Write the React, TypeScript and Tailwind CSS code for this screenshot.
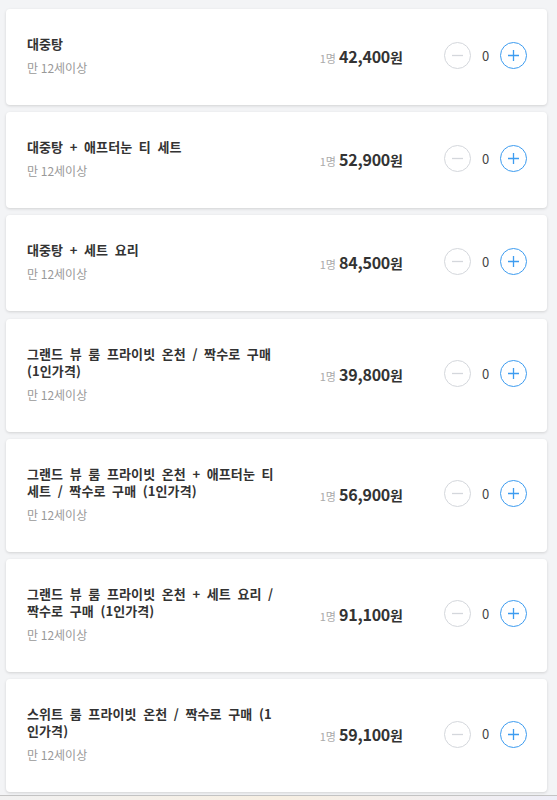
const items = [
  { title: '대중탕', age: '만 12세이상', price: '42,400' },
  { title: '대중탕 + 애프터눈 티 세트', age: '만 12세이상', price: '52,900' },
  { title: '대중탕 + 세트 요리', age: '만 12세이상', price: '84,500' },
  {
    title: '그랜드 뷰 룸 프라이빗 온천 / 짝수로 구매 (1인가격)',
    age: '만 12세이상',
    price: '39,800',
  },
  {
    title: '그랜드 뷰 룸 프라이빗 온천 + 애프터눈 티 세트 / 짝수로 구매 (1인가격)',
    age: '만 12세이상',
    price: '56,900',
  },
  {
    title: '그랜드 뷰 룸 프라이빗 온천 + 세트 요리 / 짝수로 구매 (1인가격)',
    age: '만 12세이상',
    price: '91,100',
  },
  {
    title: '스위트 룸 프라이빗 온천 / 짝수로 구매 (1인가격)',
    age: '만 12세이상',
    price: '59,100',
  },
];

const font = { fontFamily: '"Noto Sans CJK KR", "Noto Sans", sans-serif' };

const MinusButton = () => (
  <button
    type="button"
    className="flex h-[27px] w-[27px] items-center justify-center rounded-full border border-[#d4d7dc] bg-white"
  >
    <svg width="13" height="13" viewBox="0 0 13 13">
      <path d="M1 6.5h11" stroke="#d4d7dc" strokeWidth="1.3" />
    </svg>
  </button>
);

const PlusButton = () => (
  <button
    type="button"
    className="flex h-[27px] w-[27px] items-center justify-center rounded-full border border-[#3d9cf0] bg-white"
  >
    <svg width="13" height="13" viewBox="0 0 13 13">
      <path d="M1 6.5h11M6.5 1v11" stroke="#3d9cf0" strokeWidth="1.3" />
    </svg>
  </button>
);

function TicketRow({ title, age, price }: { title: string; age: string; price: string }) {
  return (
    <div className="flex items-center justify-between rounded-[4px] bg-white pb-[29px] pl-[21px] pr-[20px] pt-[26px] shadow-[0_1px_3px_rgba(0,0,0,0.14)]">
      <div className="w-[254px]">
        <div className="text-[13px] font-semibold leading-[17px] tracking-[0.1px] text-[#333] [word-spacing:3.5px]">
          {title}
        </div>
        <div className="mt-[7px] text-[12px] leading-[17px] text-[#999]">{age}</div>
      </div>
      <div className="flex items-center">
        <div className="flex items-baseline">
          <span className="mr-[3px] text-[11px] text-[#aaa]">1명</span>
          <span className="text-[16px] font-bold tracking-[-0.2px] text-[#333]">{price}</span>
          <span className="text-[14px] font-semibold text-[#333]">원</span>
        </div>
        <div className="ml-[41px] flex items-center">
          <MinusButton />
          <span className="w-[29px] text-center text-[13px] text-[#444]">0</span>
          <PlusButton />
        </div>
      </div>
    </div>
  );
}

export default function App() {
  return (
    <div className="h-[800px] overflow-hidden bg-[#f3f4f6]" style={font}>
      <div className="ml-[6px] flex w-[541px] flex-col gap-[7.2px] pt-[9px]">
        {items.map(item => (
          <TicketRow key={item.price} {...item} />
        ))}
      </div>
      <div className="mt-[3px] border-t border-[#c4c4c4]" />
      <div className="h-[6px] bg-gradient-to-r from-[#f1f1f1] via-[#f7efe2] to-[#eeeef8]" />
    </div>
  );
}
